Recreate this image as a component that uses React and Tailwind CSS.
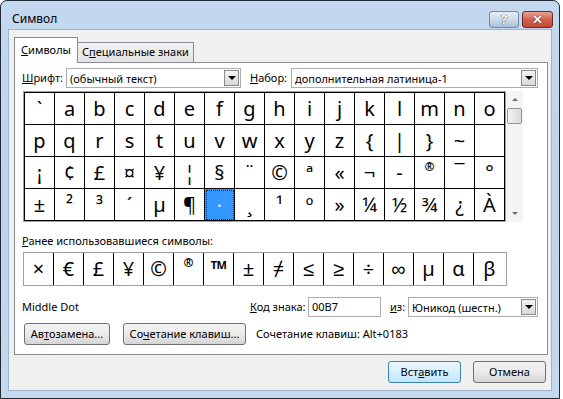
import React from 'react';

const gridRows = [
  ['`', 'a', 'b', 'c', 'd', 'e', 'f', 'g', 'h', 'i', 'j', 'k', 'l', 'm', 'n', 'o'],
  ['p', 'q', 'r', 's', 't', 'u', 'v', 'w', 'x', 'y', 'z', '{', '|', '}', '~', ''],
  ['¡', '¢', '£', '¤', '¥', '¦', '§', '¨', '©', 'ª', '«', '¬', '-', '®', '¯', '°'],
  ['±', '²', '³', '´', 'µ', '¶', '·', '¸', '¹', 'º', '»', '¼', '½', '¾', '¿', 'À'],
];

const recent = ['×', '€', '£', '¥', '©', '®', '™', '±', '≠', '≤', '≥', '÷', '∞', 'µ', 'α', 'β'];

// glyphs that the reference font draws small and raised
function Glyph({ ch }) {
  if (ch === '®') {
    return <span className="-translate-y-[6px] text-[12px] font-bold">{ch}</span>;
  }
  if (ch === '™') {
    return <span className="-translate-y-[5px] text-[11px] font-bold tracking-[-0.5px]">TM</span>;
  }
  return <span>{ch}</span>;
}

function Combo({ className, text }) {
  return (
    <div className={`flex h-[20px] items-center border border-[#abadb3] bg-white ${className}`}>
      <span className="flex-1 whitespace-nowrap pl-[3px] leading-none">{text}</span>
      <div className="mr-[1px] flex h-[16px] w-[15px] items-center justify-center border border-[#8b8b8b] bg-gradient-to-b from-[#f4f4f4] to-[#d8d8d8]">
        <div className="h-0 w-0 border-x-[4px] border-t-[4px] border-x-transparent border-t-black" />
      </div>
    </div>
  );
}

function Button({ className, children, primary }) {
  return (
    <div
      className={`flex h-[22px] items-center justify-center whitespace-nowrap rounded-[3px] border ${
        primary
          ? 'border-[#3c7fb1] bg-gradient-to-b from-[#eaf6fd] via-[#d9f0fc] to-[#bee6fd]'
          : 'border-[#707070] bg-gradient-to-b from-[#f2f2f2] via-[#ebebeb] to-[#d4d4d4]'
      } ${className}`}
    >
      {children}
    </div>
  );
}

export default function App() {
  return (
    <div className="h-[399px] w-[563px] overflow-hidden bg-white font-['Noto_Sans',sans-serif] text-[11px] text-black">
      {/* window frame */}
      <div className="flex h-[399px] w-[560px] flex-col rounded-t-[7px] border border-[#1f2a36] bg-gradient-to-b from-[#c4d9ef] via-[#bcd3ea] to-[#c5d9ee] px-[7px] pb-[7px]">
        {/* title bar */}
        <div className="flex h-[28px] items-center pt-[8px]">
          <span className="ml-[4px] flex-1 text-[12px]">Символ</span>
          <div className="mr-[-1px] flex gap-[3px]">
            <div className="flex h-[17px] w-[30px] items-center justify-center rounded-[3px] border border-[#6d88a8] bg-gradient-to-b from-[#e6eef7] via-[#cbdaea] to-[#a9c0da]">
              <span className="text-[13px] font-bold leading-none text-white [text-shadow:0_0_1px_#3d4d63,0_0_1px_#3d4d63]">?</span>
            </div>
            <div className="flex h-[17px] w-[31px] items-center justify-center rounded-[3px] border border-[#6b2a24] bg-gradient-to-b from-[#e8a493] via-[#d0614e] to-[#c24a37]">
              <span className="text-[13px] font-bold leading-none text-white [text-shadow:0_0_1px_#4a1a14,0_0_1px_#4a1a14]">✕</span>
            </div>
          </div>
        </div>

        {/* client area */}
        <div className="flex flex-1 flex-col border border-[#9fb4cc] bg-[#f0f0f0] px-[5px]">
          {/* tabs */}
          <div className="mt-[7px] flex items-end whitespace-nowrap">
            <div className="relative z-10 -mb-[1px] flex h-[26px] w-[64px] items-center justify-center border border-b-0 border-[#898c95] bg-white">
              <span><span className="underline">С</span>имволы</span>
            </div>
            <div className="flex h-[20px] w-[116px] items-center justify-center border border-b-0 border-l-0 border-[#898c95] bg-gradient-to-b from-[#f2f2f2] to-[#e3e3e3]">
              <span>С<span className="underline">п</span>ециальные знаки</span>
            </div>
          </div>

          {/* tab panel */}
          <div className="flex h-[293px] w-[534px] flex-col whitespace-nowrap border border-[#898c95] bg-white pl-[7px] pt-[5px]">
            {/* font / subset row */}
            <div className="flex items-center">
              <span className="w-[44px]"><span className="underline">Ш</span>рифт:</span>
              <Combo className="w-[175px]" text="(обычный текст)" />
              <span className="ml-[9px] w-[41px]"><span className="underline">Н</span>абор:</span>
              <Combo className="w-[247px]" text="дополнительная латиница-1" />
            </div>

            {/* symbol grid + scrollbar */}
            <div className="ml-[1px] mt-[3px] flex">
              <div className="border border-[#a0a0a0]">
                <div className="grid grid-cols-[repeat(16,30px)] border-l border-t border-black">
                  {gridRows.flat().map((ch, i) => (
                    <div
                      key={i}
                      className={`flex h-[32px] items-center justify-center border-b border-r border-black text-[20px] leading-none ${
                        ch === '·' ? 'bg-[#3399ff] text-white outline-1 -outline-offset-2 outline-dotted outline-[#3a2a10]' : ''
                      }`}
                    >
                      {ch === '·' ? <span className="text-[18px]">·</span> : <Glyph ch={ch} />}
                    </div>
                  ))}
                </div>
              </div>
              {/* scrollbar */}
              <div className="flex w-[17px] flex-col items-center bg-[#f4f4f4]">
                <div className="flex h-[17px] items-center justify-center">
                  <div className="h-0 w-0 border-x-[3px] border-b-[3px] border-x-transparent border-b-[#6f6f6f]" />
                </div>
                <div className="h-[16px] w-[15px] rounded-[2px] border border-[#979797] bg-gradient-to-r from-[#f3f3f3] to-[#dadada]" />
                <div className="flex-1" />
                <div className="flex h-[17px] items-center justify-center">
                  <div className="h-0 w-0 border-x-[3px] border-t-[3px] border-x-transparent border-t-[#6f6f6f]" />
                </div>
              </div>
            </div>

            {/* recently used */}
            <div className="mt-[11px] h-[16px] leading-[16px]">
              <span className="underline">Р</span>анее использовавшиеся символы:
            </div>
            <div className="ml-[1px] mt-[3px] flex h-[34px] w-[484px] border border-[#a0a0a0]">
              {recent.map((ch, i) => (
                <div
                  key={i}
                  className={`flex h-[32px] items-center justify-center text-[20px] leading-none ${
                    i === recent.length - 1 ? 'w-[31px]' : 'w-[30px] border-r border-black'
                  }`}
                >
                  <Glyph ch={ch} />
                </div>
              ))}
            </div>

            {/* name / code row */}
            <div className="mt-[11px] flex h-[20px] items-center">
              <span className="w-[228px]">Middle Dot</span>
              <span className="w-[58px]"><span className="underline">К</span>од знака:</span>
              <div className="flex h-[20px] w-[73px] items-center border border-[#abadb3] bg-white pl-[3px]">00B7</div>
              <span className="ml-[9px] w-[18px]"><span className="underline">и</span>з:</span>
              <Combo className="w-[130px]" text="Юникод (шестн.)" />
            </div>

            {/* buttons row */}
            <div className="mt-[6px] flex items-center">
              <Button className="ml-[2px] w-[86px]">
                <span>Ав<span className="underline">т</span>озамена...</span>
              </Button>
              <Button className="ml-[13px] w-[123px]">
                <span>Со<span className="underline">ч</span>етание клавиш...</span>
              </Button>
              <span className="ml-[10px]">Сочетание клавиш: Alt+0183</span>
            </div>
          </div>

          {/* dialog buttons */}
          <div className="mt-[6px] flex justify-end gap-[12px]">
            <Button primary className="w-[73px]">
              <span>Вст<span className="underline">а</span>вить</span>
            </Button>
            <Button className="w-[73px]">Отмена</Button>
          </div>
        </div>
      </div>
    </div>
  );
}
